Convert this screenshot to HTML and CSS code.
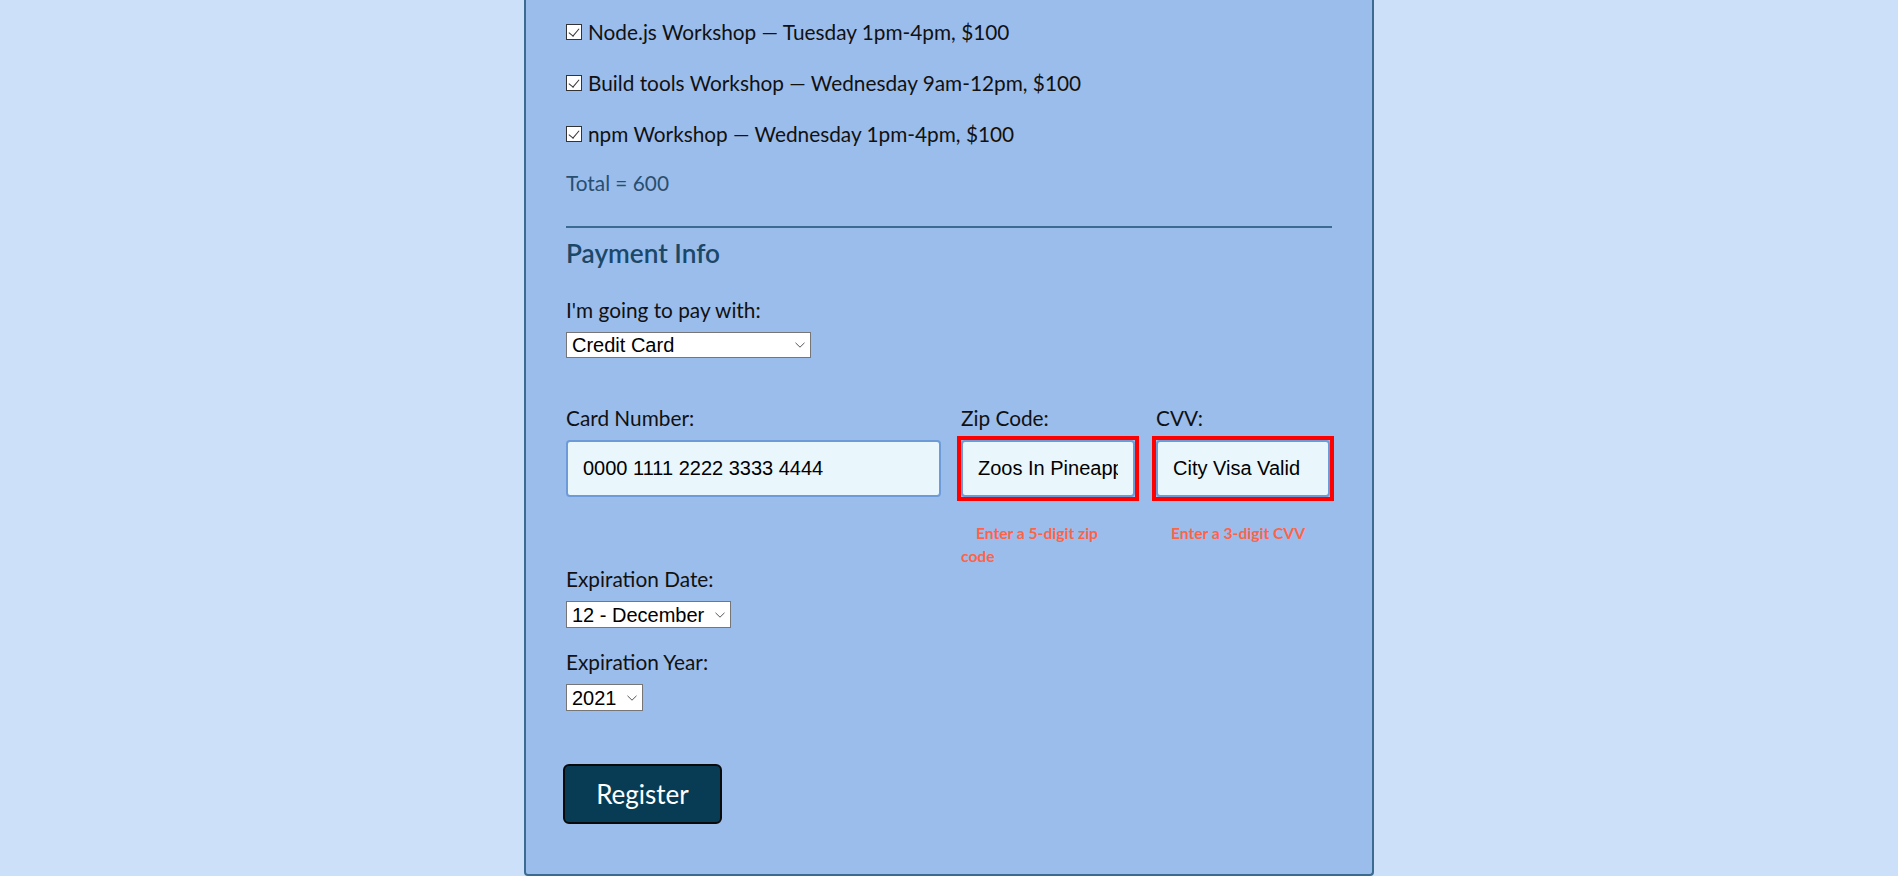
FILE: index.html
```html
<!DOCTYPE html>
<html lang="en">
<head>
<meta charset="utf-8">
<title>Register</title>
<link rel="stylesheet" href="styles.css">
</head>
<body>
<form class="register">
  <fieldset class="activities">
    <label class="activity"><input class="check" type="checkbox" checked>Node.js Workshop — Tuesday 1pm-4pm, $100</label>
    <label class="activity"><input class="check" type="checkbox" checked>Build tools Workshop — Wednesday 9am-12pm, $100</label>
    <label class="activity"><input class="check" type="checkbox" checked>npm Workshop — Wednesday 1pm-4pm, $100</label>
    <p class="total">Total = 600</p>
  </fieldset>

  <fieldset class="payment">
    <h3 class="legend">Payment Info</h3>
    <label class="field-label" for="payment">I'm going to pay with:</label>
    <select id="payment" class="select select-payment">
      <option>Credit Card</option>
    </select>

    <div class="card-row">
      <div class="col col-card">
        <label class="field-label" for="cc-num">Card Number:</label>
        <div class="frame"><input id="cc-num" class="text-input" type="text" value="0000 1111 2222 3333 4444"></div>
      </div>
      <div class="col col-small">
        <label class="field-label" for="zip">Zip Code:</label>
        <div class="frame invalid"><input id="zip" class="text-input" type="text" value="Zoos In Pineapple"></div>
        <p class="error">Enter a 5-digit zip code</p>
      </div>
      <div class="col col-small">
        <label class="field-label" for="cvv">CVV:</label>
        <div class="frame invalid"><input id="cvv" class="text-input" type="text" value="City Visa Valid"></div>
        <p class="error">Enter a 3-digit CVV</p>
      </div>
    </div>

    <label class="field-label" for="exp-month">Expiration Date:</label>
    <select id="exp-month" class="select select-month">
      <option>12 - December</option>
    </select>

    <label class="field-label year-label" for="exp-year">Expiration Year:</label>
    <select id="exp-year" class="select select-year">
      <option>2021</option>
    </select>
  </fieldset>

  <button class="register-btn" type="submit">Register</button>
</form>
</body>
</html>
```

FILE: styles.css
```css
* {
  box-sizing: border-box;
}

body {
  margin: 0;
  background: #cce0fa;
  font-family: "Lato", "Noto Sans", sans-serif;
  font-size: 20.8px;
  color: #111;
}

.register {
  width: 850px;
  margin: 0 auto;
  padding: 17px 40px 50px;
  background: #9bbdec;
  border: 2px solid #3b6b91;
  border-top: none;
  border-radius: 0 0 4px 4px;
}

fieldset {
  border: none;
  margin: 0;
  padding: 0;
  min-width: 0;
}

.activities {
  border-bottom: 2px solid #3b6b91;
  padding-bottom: 28px;
}

.activity {
  display: flex;
  align-items: center;
  line-height: 30px;
  margin-bottom: 21px;
}

.check {
  appearance: none;
  -webkit-appearance: none;
  position: relative;
  width: 16px;
  height: 16px;
  margin: 0 6px 0 0;
  background: #fff;
  border: 1px solid #333;
  flex: none;
}

.check:checked::after {
  content: "";
  position: absolute;
  left: 4px;
  top: 1px;
  width: 5px;
  height: 9px;
  border-right: 1.5px solid #333;
  border-bottom: 1.5px solid #333;
  transform: rotate(40deg);
}

.total {
  margin: -2px 0 0;
  line-height: 30px;
  color: #284f70;
}

.legend {
  margin: 9px 0 29px;
  font-size: 26.2px;
  line-height: 32px;
  font-weight: 600;
  color: #1b4868;
}

.field-label {
  display: block;
  line-height: 24px;
  margin-bottom: 10px;
}

.select {
  appearance: none;
  -webkit-appearance: none;
  display: block;
  height: 26px;
  padding: 0 20px 0 5px;
  font-family: "Liberation Sans", Arial, sans-serif;
  font-size: 20px;
  color: #000;
  background-color: #fff;
  background-image: url("data:image/svg+xml,%3Csvg xmlns='http://www.w3.org/2000/svg' width='10' height='6' viewBox='0 0 10 6'%3E%3Cpath d='M0.5 0.8 L5 5.2 L9.5 0.8' fill='none' stroke='%23555' stroke-width='1'/%3E%3C/svg%3E");
  background-repeat: no-repeat;
  background-position: right 5px center;
  border: 1px solid #767676;
  border-radius: 0;
}

.select-payment {
  width: 245px;
}

.select-month {
  width: 165px;
  height: 27px;
}

.select-year {
  width: 77px;
  height: 27px;
}

.card-row {
  display: flex;
  gap: 20px;
  margin-top: 48px;
}

.col-card {
  width: 375px;
}

.col-small {
  width: 174px;
}

.col-small + .col-small {
  margin-left: 1px;
}

.frame {
  display: block;
}

.frame.invalid {
  outline: 4px solid #ff0000;
}

.text-input {
  display: block;
  width: 100%;
  height: 57px;
  padding: 0 15px;
  margin: 0;
  border: 2px solid #6d9bd8;
  border-radius: 4px;
  background: #e9f6fc;
  font-family: "Liberation Sans", Arial, sans-serif;
  font-size: 20px;
  color: #000;
}

.error {
  margin: 25px 0 0;
  padding-right: 4px;
  text-indent: 15px;
  font-size: 15.6px;
  line-height: 22.5px;
  font-weight: 700;
  color: #ff6347;
}

.year-label {
  margin-top: 22px;
}

.register-btn {
  display: block;
  width: 159px;
  height: 60px;
  margin: 53px 0 0 -3px;
  padding: 0;
  background: #083c55;
  border: 2px solid #0a0a0a;
  border-radius: 6px;
  color: #fff;
  font-family: "Lato", "Noto Sans", sans-serif;
  font-size: 26px;
}
```
